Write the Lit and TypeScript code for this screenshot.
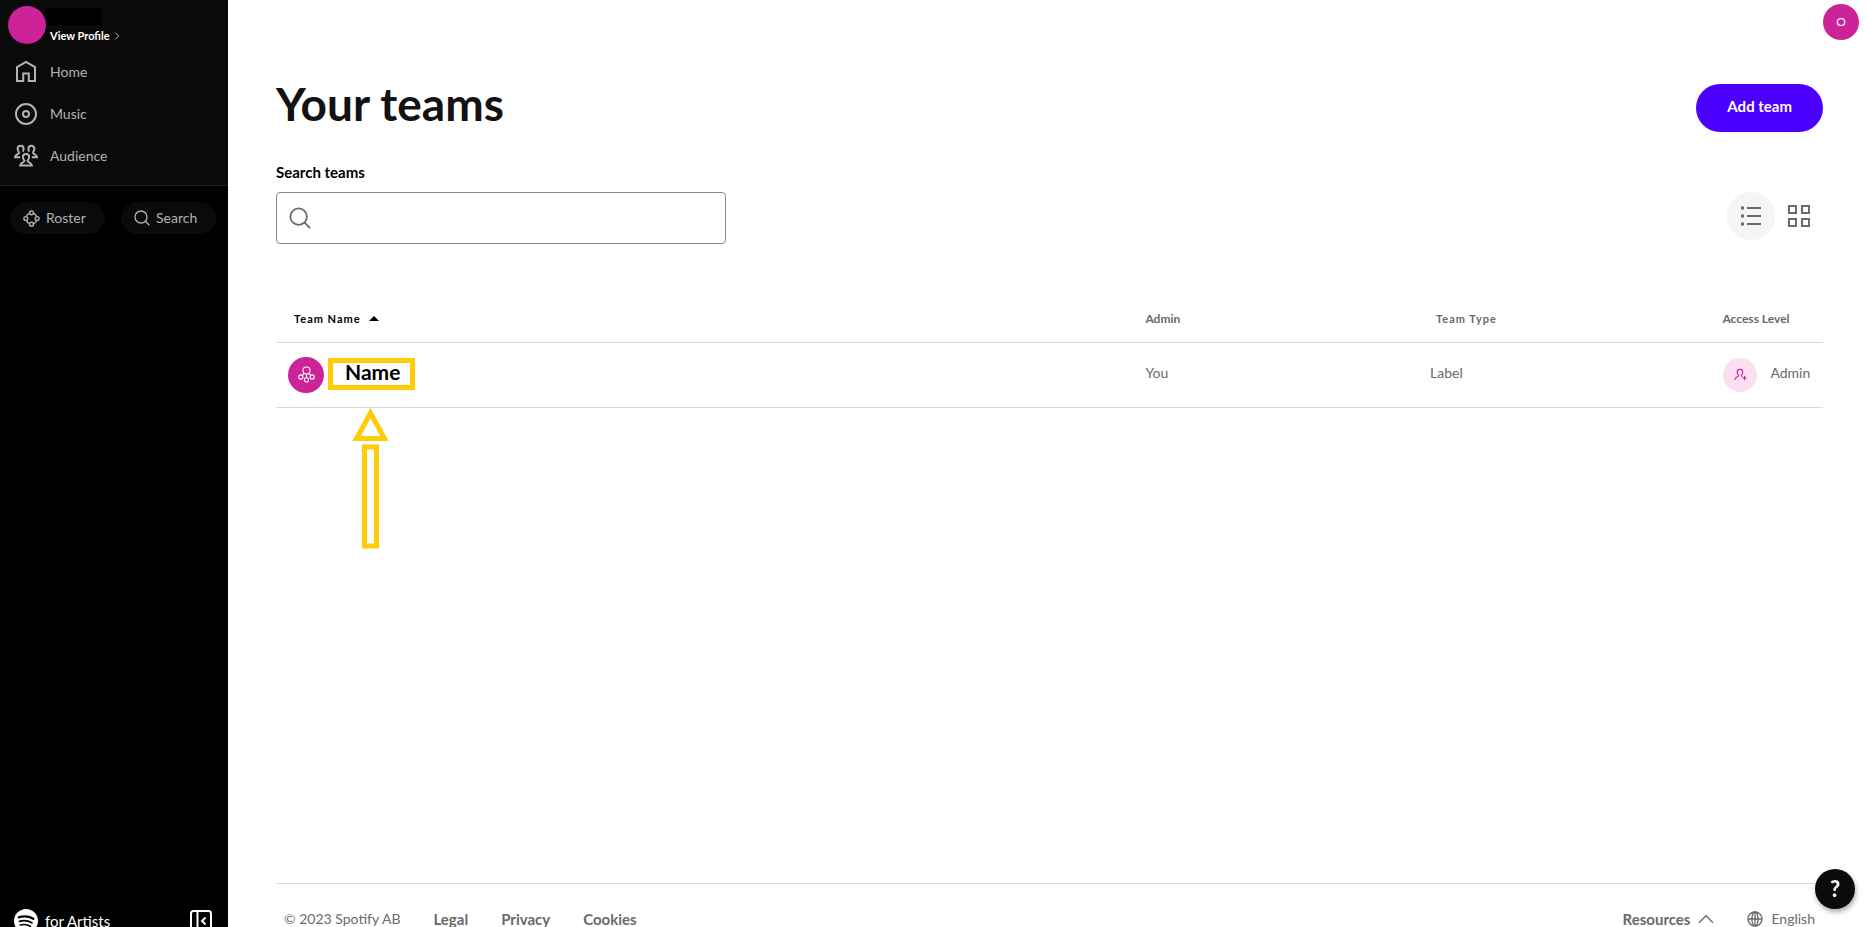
import { LitElement, html, css, svg } from "lit";
import { customElement, state } from "lit/decorators.js";
import { classMap } from "lit/directives/class-map.js";

const icons = {
  home: svg`<path d="M3 21V7.200L12 2l9 5.200V21h-6.200v-7.500H9.200V21z" />`,
  music: svg`<circle cx="12" cy="12" r="10" /><circle cx="12" cy="12" r="3" />`,
  audience: svg`<path d="M5.200 8.300C4 7.300 3.600 6 3.600 4.800a3 3 0 0 1 6 0c0 1-.3 2-.9 2.800M5.200 8.300c0 2-3.800 1.500-4.200 4.900h5.200M18.800 8.300c1.200-1 1.600-2.300 1.600-3.500a3 3 0 0 0-6 0c0 1 .3 2 .9 2.800M18.800 8.300c0 2 3.800 1.500 4.200 4.900h-5.200M10.500 16.700C9.300 15.700 8.900 14.400 8.900 13.100a3.100 3.100 0 0 1 6.200 0c0 1.300-.4 2.600-1.600 3.600 0 1.900 3.900 1.400 4.300 4.700H6.200c.4-3.300 4.300-2.800 4.300-4.700z" />`,
  roster: svg`<circle cx="12" cy="4" r="2.700" /><circle cx="20" cy="12" r="2.700" /><circle cx="12" cy="20" r="2.700" /><circle cx="4" cy="12" r="2.700" /><path d="M9.200 4.800Q6 6 4.800 9.200M14.800 4.800Q18 6 19.200 9.200M9.200 19.200Q6 18 4.800 14.800M14.800 19.200Q18 18 19.200 14.800" />`,
  search: svg`<circle cx="10.500" cy="10.500" r="9" /><path d="M17 17l6 6" />`,
  list: svg`<path d="M8 4h14M8 12h14M8 20h14" /><path d="M2 4h3M2 12h3M2 20h3" stroke-width="3" />`,
  grid: svg`<path d="M2 2h7v7H2zM15 2h7v7h-7zM2 15h7v7H2zM15 15h7v7h-7z" />`,
  team: svg`<circle cx="12" cy="6.500" r="5" /><circle cx="4" cy="15.500" r="3" /><circle cx="20" cy="15.500" r="3" /><circle cx="12" cy="19.500" r="3" /><path d="M8.800 10.500l-2.800 2.800M15.200 10.500l2.800 2.800M12 11.500v5" />`,
  userPlus: svg`<path d="M1.500 22c.3-6.500 7-4.500 7-8.500-2.200-1.600-2.700-4-2.700-5.800a5.200 5.200 0 0 1 10.400 0c0 1.800-.5 4.200-2.700 5.800 0 1.500.8 2.200 1.800 2.800M19.500 14.500v8M15.500 18.500h8" />`,
  chevronUp: svg`<path d="M1.500 17.500L12 7l10.500 10.500" />`,
  chevronRight: svg`<path d="M7 2l10 10L7 22" />`,
  globe: svg`<circle cx="12" cy="12" r="10.500" /><ellipse cx="12" cy="12" rx="4.700" ry="10.500" /><path d="M1.500 12h21M12 1.500v21" />`,
  collapse: svg`<rect x="2" y="2" width="20" height="20" rx="2.500" /><path d="M8.500 2v20M16.500 8.500L13 12l3.500 3.500" />`,
};

const icon = (name: keyof typeof icons, size: number, weight = 2) => html`
  <svg width=${size} height=${size} viewBox="0 0 24 24" fill="none" stroke="currentColor"
    stroke-width=${weight} aria-hidden="true">${icons[name]}</svg>`;

const base = css`
  * { box-sizing: border-box; }
  svg { display: block; flex: none; }
  a { color: inherit; text-decoration: none; }
  button {
    font: inherit; color: inherit; background: none; border: 0; padding: 0; cursor: pointer;
  }
`;

@customElement("side-bar")
class SideBar extends LitElement {
  static styles = [base, css`
    :host {
      display: flex; flex-direction: column; flex: none; width: 228px;
      height: calc(100% + 16px); background: #000; color: #b3b3b3;
    }
    .top { background: #0a0a0a; border-bottom: 1px solid #1c1c1c; padding: 6px 8px 8px; }
    .profile { display: flex; }
    .photo { width: 38px; height: 38px; border-radius: 50%; background: #cd2399; }
    .who { display: flex; flex-direction: column; gap: 4px; padding-top: 2px; }
    .artist { width: 56px; height: 17px; background: #000; }
    .view {
      display: flex; align-items: center; gap: 3px; margin-left: 4px;
      font-size: 11px; line-height: 14px; font-weight: 700; color: #fff;
    }
    .view svg { color: #b3b3b3; }
    nav { display: flex; flex-direction: column; padding: 7px 6px 0; }
    nav a {
      display: flex; align-items: center; gap: 12px; height: 42px;
      font-size: 14px; line-height: 20px;
    }
    .pills { display: grid; grid-template-columns: 1fr 1fr; gap: 16px; padding: 16px 12px 0 10px; }
    .pill {
      display: flex; align-items: center; gap: 6px; height: 32px; padding-left: 13px;
      border-radius: 16px; background: #0a0a0a; font-size: 14px; line-height: 20px;
    }
    .brand {
      display: flex; align-items: center; margin-top: auto; padding: 0 15px 10px 14px; color: #fff;
    }
    .word { margin-left: 7px; font-size: 15px; line-height: 12px; font-weight: 400; }
    .collapse { margin-left: auto; }
  `];

  render() {
    return html`
      <div class="top">
        <div class="profile">
          <div class="photo"></div>
          <div class="who">
            <div class="artist"></div>
            <a class="view" href="#profile">View Profile ${icon("chevronRight", 8, 3)}</a>
          </div>
        </div>
        <nav aria-label="Main">
          <a href="#home">${icon("home", 24)}Home</a>
          <a href="#music">${icon("music", 24)}Music</a>
          <a href="#audience">${icon("audience", 24)}Audience</a>
        </nav>
      </div>
      <div class="pills">
        <button class="pill">${icon("roster", 17, 2)}Roster</button>
        <button class="pill">${icon("search", 16, 2)}Search</button>
      </div>
      <div class="brand">
        <svg width="24" height="24" viewBox="0 0 24 24" fill="none" stroke="#000" stroke-linecap="round" aria-hidden="true">
          <circle cx="12" cy="12" r="12" fill="#fff" stroke="none" />
          <path d="M4.800 8.300c5-1.400 10.300-.9 14.500 1.500" stroke-width="2.300" />
          <path d="M5.500 12.300c4.300-1.200 8.700-.7 12.300 1.400" stroke-width="1.900" />
          <path d="M6.200 16c3.500-.9 7.100-.5 10.200 1.300" stroke-width="1.600" />
        </svg>
        <span class="word">for Artists</span>
        <button class="collapse" aria-label="Collapse sidebar">${icon("collapse", 24, 2)}</button>
      </div>`;
  }
}

@customElement("team-table")
class TeamTable extends LitElement {
  static styles = [base, css`
    :host { display: block; }
    table { width: 100%; border-collapse: collapse; table-layout: fixed; color: #6a6a6a; }
    th {
      height: 46px; padding: 0; border-bottom: 1px solid #d9d9d9;
      text-align: left; font-size: 12px; line-height: 16px; font-weight: 700;
    }
    td {
      height: 65px; padding: 0; border-bottom: 1px solid #d9d9d9;
      font-size: 14px; line-height: 20px;
    }
    .name { width: 56.200%; }
    .admin { width: 18.400%; }
    .type { width: 18.900%; }
    .sort { display: flex; align-items: center; gap: 8px; margin-left: 18px; color: #000; }
    .spaced { font-size: 11px; letter-spacing: 1px; }
    th.type { padding-left: 6px; }
    .text { display: block; padding-bottom: 4px; }
    .team { display: flex; align-items: center; gap: 4px; padding-left: 12px; }
    .badge {
      display: grid; place-items: center; width: 36px; height: 36px;
      border-radius: 50%; background: #cd2399; color: #fff;
    }
    .marked {
      position: relative; display: flex; border: 5px solid #ffcd05;
      margin-bottom: 2px; padding: 0 10px 4px 12px;
    }
    .label { font-size: 21px; line-height: 18px; font-weight: 700; color: #000; }
    .arrow { position: absolute; top: 45px; left: 19px; }
    .level { display: flex; align-items: center; gap: 13px; }
    .role {
      display: grid; place-items: center; width: 34px; height: 34px; margin-left: 1px;
      border-radius: 50%; background: #fbdff0; color: #cd2399;
    }
  `];

  render() {
    return html`
      <table>
        <thead>
          <tr>
            <th class="name" aria-sort="ascending">
              <button class="sort spaced">Team Name
                <svg width="10" height="5" viewBox="0 0 10 5" aria-hidden="true"><path d="M0 5l5-5 5 5z" /></svg>
              </button>
            </th>
            <th class="admin">Admin</th>
            <th class="type spaced">Team Type</th>
            <th>Access Level</th>
          </tr>
        </thead>
        <tbody>
          <tr>
            <td>
              <div class="team">
                <span class="badge">${icon("team", 17, 1.5)}</span>
                <div class="marked">
                  <a class="label" href="#team">Name</a>
                  <svg class="arrow" width="37" height="142" viewBox="0 0 37 142" fill="none"
                    stroke="#ffcd05" stroke-width="5" aria-hidden="true">
                    <path d="M18.500 5L4.500 30.500h28z" />
                    <rect x="12.500" y="39" width="12" height="99" />
                  </svg>
                </div>
              </div>
            </td>
            <td><span class="text">You</span></td>
            <td><span class="text">Label</span></td>
            <td>
              <div class="level">
                <span class="role">${icon("userPlus", 13, 2)}</span><span class="text">Admin</span>
              </div>
            </td>
          </tr>
        </tbody>
      </table>`;
  }
}

@customElement("app-root")
class AppRoot extends LitElement {
  @state() private view: "list" | "grid" = "list";

  static styles = [base, css`
    :host {
      display: flex; height: 100vh; overflow: hidden; background: #fff; color: #000;
      font-family: Lato, "Open Sans", sans-serif; font-size: 14px; line-height: 20px;
    }
    .page { display: flex; flex-direction: column; flex: 1; min-width: 0; }
    .bar { display: flex; justify-content: flex-end; padding: 4px 8px 0; }
    .user {
      width: 36px; height: 36px; border-radius: 50%; background: #cd2399; color: #fff;
      font-size: 12px; line-height: 34px;
    }
    main { padding: 44px 44px 0 48px; }
    .head { display: flex; justify-content: space-between; align-items: center; height: 48px; }
    h1 { margin: 0 0 8px; font-size: 46px; line-height: 56px; font-weight: 700; color: #121212; }
    .add {
      height: 48px; padding: 0 31px 4px; border-radius: 24px; background: #4b00ff;
      color: #fff; font-size: 15px; line-height: 20px; font-weight: 700;
    }
    .tools { display: flex; justify-content: space-between; align-items: flex-end; margin-top: 30px; }
    .search { width: 450px; }
    .search label { display: block; font-size: 15px; line-height: 20px; font-weight: 700; margin-bottom: 10px; }
    .field {
      display: flex; align-items: center; gap: 12px; height: 52px; padding: 0 12px;
      border: 1px solid #878787; border-radius: 4px; color: #6a6a6a;
    }
    input { flex: 1; min-width: 0; border: 0; outline: 0; font: inherit; color: #000; background: none; }
    .views { display: flex; margin-bottom: 4px; color: #6a6a6a; }
    .views button { display: grid; place-items: center; width: 48px; height: 48px; border-radius: 50%; }
    .views .on { background: #f5f5f5; }
    team-table { margin-top: 52px; }
    footer {
      display: flex; align-items: center; gap: 33px; margin: auto 44px 0 48px;
      height: 44px; padding: 26px 8px 0; border-top: 1px solid #d9d9d9; color: #6a6a6a;
    }
    footer a, footer .menu { font-size: 15px; font-weight: 700; }
    .menu, footer .lang { display: flex; align-items: center; gap: 8px; }
    .menu { margin-left: auto; }
    .help {
      position: fixed; right: 12px; bottom: 18px; width: 40px; height: 40px; border-radius: 50%;
      background: #0a0a0a; color: #eee; box-shadow: 1px 3px 5px #0005;
      font-size: 22px; line-height: 38px; font-weight: 900;
    }
  `];

  render() {
    return html`
      <side-bar></side-bar>
      <div class="page">
        <div class="bar"><button class="user" aria-label="Account">O</button></div>
        <main>
          <div class="head">
            <h1>Your teams</h1>
            <button class="add">Add team</button>
          </div>
          <div class="tools">
            <div class="search">
              <label for="q">Search teams</label>
              <div class="field">${icon("search", 22, 2)}<input id="q" type="search" /></div>
            </div>
            <div class="views">
              <button class=${classMap({ on: this.view === "list" })} aria-label="List view"
                @click=${() => (this.view = "list")}>${icon("list", 24, 2)}</button>
              <button class=${classMap({ on: this.view === "grid" })} aria-label="Grid view"
                @click=${() => (this.view = "grid")}>${icon("grid", 24, 2)}</button>
            </div>
          </div>
          <team-table></team-table>
        </main>
        <footer>
          <span>© 2023 Spotify AB</span>
          <a href="#legal">Legal</a>
          <a href="#privacy">Privacy</a>
          <a href="#cookies">Cookies</a>
          <button class="menu">Resources ${icon("chevronUp", 16, 2)}</button>
          <button class="lang">${icon("globe", 16, 2)}English</button>
        </footer>
      </div>
      <button class="help" aria-label="Help">?</button>`;
  }
}
